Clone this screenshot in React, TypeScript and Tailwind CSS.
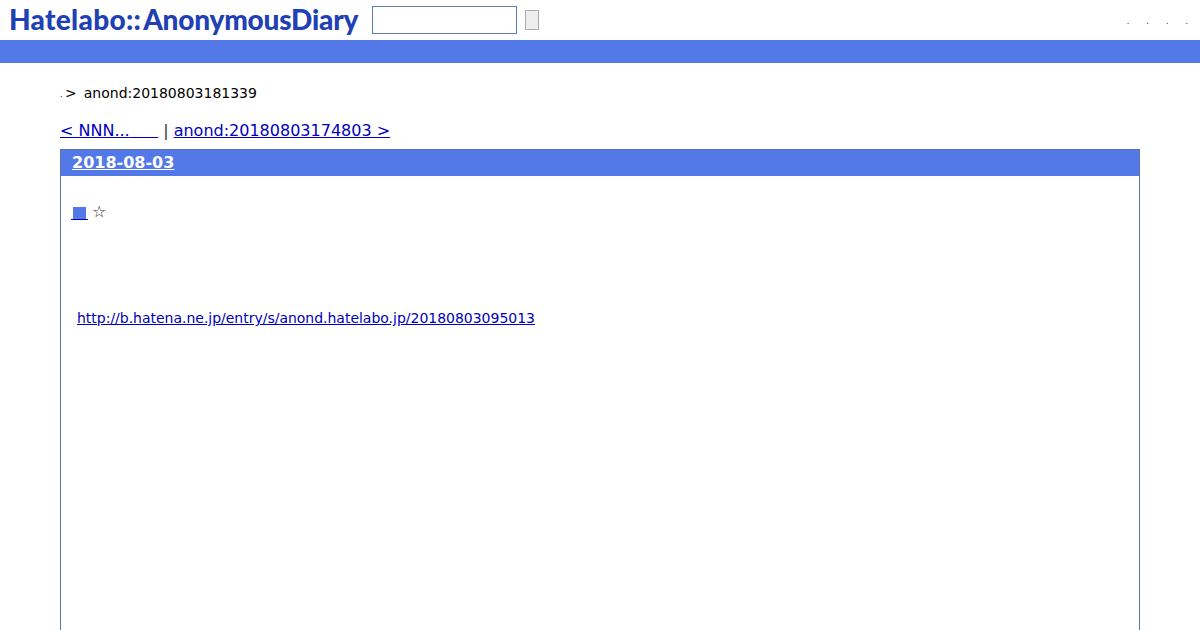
export default function App() {
  return (
    <div className="h-[630px] overflow-hidden bg-white font-['DejaVu_Sans',sans-serif] text-black">
      {/* header */}
      <div className="flex h-10 items-start">
        <h1 className="ml-[9px] mt-[2px] flex w-[363px] font-['Lato',sans-serif] text-[28px] leading-[34px] font-black whitespace-nowrap text-[#2040b4]">
          <span className="tracking-[0.3px]">Hatelabo::</span>
          <span className="ml-[2px] tracking-[-0.2px]">AnonymousDiary</span>
        </h1>
        <input className="mt-1.5 h-7 w-[145px] border border-[#5f7fb0] bg-white" />
        <button className="mt-2.5 ml-2 h-5 w-3.5 border border-[#aaaaaa] bg-[#eeeeee]" />
        <ul className="mt-4 mr-3 ml-auto flex gap-[17px] text-[8px] leading-3 text-[#222222]">
          <li>.</li>
          <li>.</li>
          <li>.</li>
          <li>.</li>
        </ul>
      </div>
      <div className="h-[23px] bg-[#5279e7]" />

      {/* breadcrumb */}
      <p className="mx-[60px] mt-[21px] flex h-[18px] items-center text-sm leading-[18px] whitespace-pre">
        <span className="mt-[3px] w-[5px] text-[8px]">.</span>
        <span>&gt;</span>
        <span className="ml-[7px]">anond:20180803181339</span>
      </p>

      {/* prev / next */}
      <p className="mx-[60px] mt-[19px] text-base leading-5 whitespace-pre text-[#333333]">
        <a href="#" className="text-[#0000bb] underline">
          &lt; NNN...<span className="tracking-[0.6px]">     </span>
        </a>
        {' | '}
        <a href="#" className="text-[#0000bb] underline">anond:20180803174803 &gt;</a>
      </p>

      {/* day section */}
      <section className="mx-[60px] mt-2 h-[600px] border border-[#5d74a8]">
        <h2 className="h-[26px] bg-[#5279e7] pl-[11px] text-base leading-[25px] font-bold text-white">
          <a href="#" className="underline">2018-08-03</a>
        </h2>
        <div className="mt-[27px] flex h-[18px] items-start pl-2.5 text-base">
          <a href="#" className="block h-[17px] border-b border-[#0000bb] px-[2px] pt-1">
            <span className="block h-3 w-[13px] bg-[#5279e7]" />
          </a>
          <span className="ml-1 self-center leading-none text-[#333333]">☆</span>
        </div>
        <p className="mt-[88px] pl-4 text-sm leading-[18px] tracking-[-0.016px]">
          <a href="#" className="text-[#0000bb] underline">http://b.hatena.ne.jp/entry/s/anond.hatelabo.jp/20180803095013</a>
        </p>
      </section>
    </div>
  );
}
